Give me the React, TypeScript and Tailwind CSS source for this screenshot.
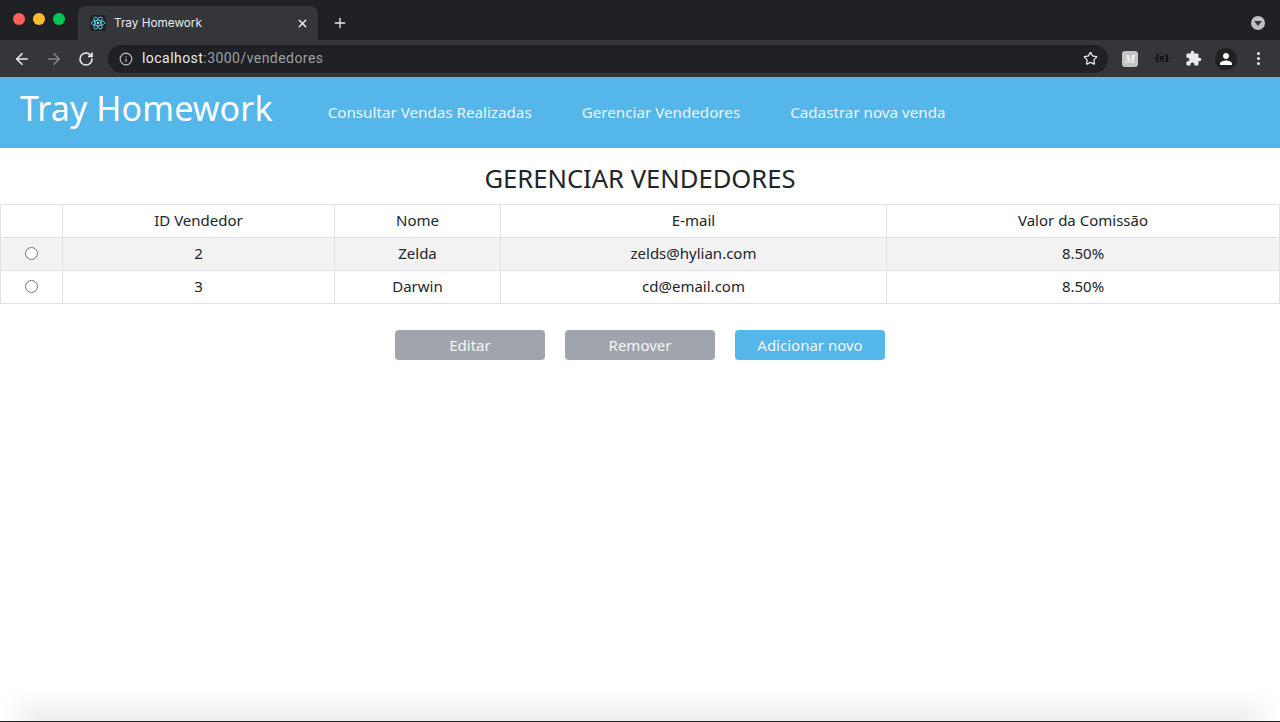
import { ArrowLeft, ArrowRight, RotateCw, Info, Star, X, Plus } from 'lucide-react';
import { MdExtension, MdPerson } from 'react-icons/md';

const columns = [
  { label: '', width: 'w-[62px]' },
  { label: 'ID Vendedor', width: 'w-[272px]' },
  { label: 'Nome', width: 'w-[166px]' },
  { label: 'E-mail', width: 'w-[386px]' },
  { label: 'Valor da Comissão', width: 'w-[393px]' },
];

const sellers = [
  { id: 2, name: 'Zelda', email: 'zelds@hylian.com', commission: '8.50%' },
  { id: 3, name: 'Darwin', email: 'cd@email.com', commission: '8.50%' },
];

function ReactFavicon() {
  return (
    <div className="w-4 h-4 bg-[#20232a] rounded-[2px] flex items-center justify-center">
      <svg viewBox="-12 -12 24 24" className="w-4 h-4" fill="none" stroke="#61dafb" strokeWidth="1.2">
        <circle r="2" fill="#61dafb" stroke="none" />
        <ellipse rx="10" ry="4" />
        <ellipse rx="10" ry="4" transform="rotate(60)" />
        <ellipse rx="10" ry="4" transform="rotate(120)" />
      </svg>
    </div>
  );
}

function BrowserChrome() {
  return (
    <div className="font-['Inter',sans-serif]">
      {/* Tab strip */}
      <div className="h-10 bg-[#202124] flex items-end relative">
        <div className="flex gap-2 pl-[13px] pr-[13px] self-start pt-[13px]">
          <span className="w-3 h-3 rounded-full bg-[#fe5f57]" />
          <span className="w-3 h-3 rounded-full bg-[#febc2e]" />
          <span className="w-3 h-3 rounded-full bg-[#06c755]" />
        </div>
        <div className="w-[240px] h-[34px] bg-[#35363a] rounded-t-[8px] flex items-center pl-[12px] pr-[9px]">
          <ReactFavicon />
          <span className="ml-2 mt-[1px] text-[11.75px] text-[#e8eaed] flex-1">Tray Homework</span>
          <X size={13} strokeWidth={2.5} className="text-white" />
        </div>
        <Plus size={16} strokeWidth={2} className="ml-[14px] mb-[9px] text-[#e8eaed]" />
        <div className="ml-auto mr-[15px] mb-[10px] w-[14px] h-[14px] rounded-full bg-[#bdc1c6] flex items-center justify-center">
          <div className="w-0 h-0 border-x-[4px] border-x-transparent border-t-[5px] border-t-[#35363a] mt-[1px]" />
        </div>
      </div>
      {/* Toolbar */}
      <div className="h-[37px] bg-[#35363a] flex items-center">
        <ArrowLeft size={18} strokeWidth={2.2} className="ml-[13px] text-[#e8eaed]" />
        <ArrowRight size={18} strokeWidth={2.2} className="ml-[14px] text-[#80868b]" />
        <RotateCw size={16} strokeWidth={2.4} className="ml-[15px] text-[#e8eaed]" />
        <div className="ml-[14px] w-[1000px] h-[28px] rounded-full bg-[#202124] flex items-center pl-[11px] pr-[10px]">
          <Info size={14} className="text-[#bdc1c6]" />
          <span className="ml-[9px] text-[14px] text-[#e8eaed] flex-1 font-['Roboto',sans-serif] tracking-[0.45px]">
            localhost<span className="text-[#9aa0a6]">:3000/vendedores</span>
          </span>
          <Star size={15} className="text-[#e8eaed]" />
        </div>
        <div className="ml-[14px] w-4 h-4 rounded-[3px] bg-[#c4c4c4] flex items-center justify-center text-[12px] leading-none text-white italic font-['Liberation_Serif',serif]">
          M
        </div>
        <span className="ml-[16px] w-[16px] text-center text-[8px] font-bold leading-none text-black font-['DejaVu_Sans_Mono',monospace]">
          {'{≡}'}
        </span>
        <MdExtension size={17} className="ml-[15px] text-[#e8eaed]" />
        <div className="ml-[13px] w-[22px] h-[22px] rounded-full bg-[#202124] flex items-center justify-center">
          <MdPerson size={18} className="text-white" />
        </div>
        <div className="ml-[20px] flex flex-col gap-[2px]">
          <span className="w-[3px] h-[3px] rounded-full bg-[#e8eaed]" />
          <span className="w-[3px] h-[3px] rounded-full bg-[#e8eaed]" />
          <span className="w-[3px] h-[3px] rounded-full bg-[#e8eaed]" />
        </div>
      </div>
    </div>
  );
}

export default function App() {
  return (
    <div className="relative h-[722px] overflow-hidden bg-white flex flex-col font-['Noto_Sans',sans-serif] text-[#212529]">
      <BrowserChrome />

      {/* Navbar */}
      <nav className="h-[71px] shrink-0 bg-[#54b6e9] flex items-center text-white">
        <span className="ml-5 text-[34px] leading-none tracking-[0.1px] -mt-[9px]">Tray Homework</span>
        <div className="ml-[55px] flex gap-[50px] text-[15.2px] text-[#eaf6fc] -mt-[1px]">
          <a>Consultar Vendas Realizadas</a>
          <a>Gerenciar Vendedores</a>
          <a>Cadastrar nova venda</a>
        </div>
      </nav>

      <h1 className="mt-[13px] text-center text-[25.6px] leading-[36px] uppercase">Gerenciar Vendedores</h1>

      <table className="mt-[7px] w-[1279px] table-fixed border-collapse text-[15px]">
        <thead>
          <tr className="h-[33px]">
            {columns.map((col) => (
              <th key={col.label} className={`${col.width} border border-[#dee2e6] font-normal p-0 pb-[1px]`}>
                {col.label}
              </th>
            ))}
          </tr>
        </thead>
        <tbody>
          {sellers.map((seller, index) => (
            <tr key={seller.id} className={index === 0 ? 'h-[33px] bg-[#f2f2f2]' : 'h-[33px]'}>
              <td className="border border-[#dee2e6] p-0 pb-[2px] text-center">
                <input type="radio" name="seller" className="w-[13px] h-[13px] align-middle -mt-[3px]" />
              </td>
              <td className="border border-[#dee2e6] p-0 pb-[1px] text-center">{seller.id}</td>
              <td className="border border-[#dee2e6] p-0 pb-[1px] text-center">{seller.name}</td>
              <td className="border border-[#dee2e6] p-0 pb-[1px] text-center">{seller.email}</td>
              <td className="border border-[#dee2e6] p-0 pb-[1px] text-center">{seller.commission}</td>
            </tr>
          ))}
        </tbody>
      </table>

      <div className="mt-[26px] flex justify-center gap-5 text-[15px] text-[#f4f5f6]">
        <button className="w-[150px] h-[30px] rounded-[4px] bg-[#a0a5ad]">Editar</button>
        <button className="w-[150px] h-[30px] rounded-[4px] bg-[#a0a5ad]">Remover</button>
        <button className="w-[150px] h-[30px] rounded-[4px] bg-[#54b6e9]">Adicionar novo</button>
      </div>

      {/* Window shadow along the bottom edge */}
      <div className="absolute left-[20px] right-[20px] -bottom-[14px] h-[26px] bg-black/10 blur-[14px]" />
      <div className="absolute inset-x-0 bottom-0 h-px bg-[#222]" />
    </div>
  );
}
